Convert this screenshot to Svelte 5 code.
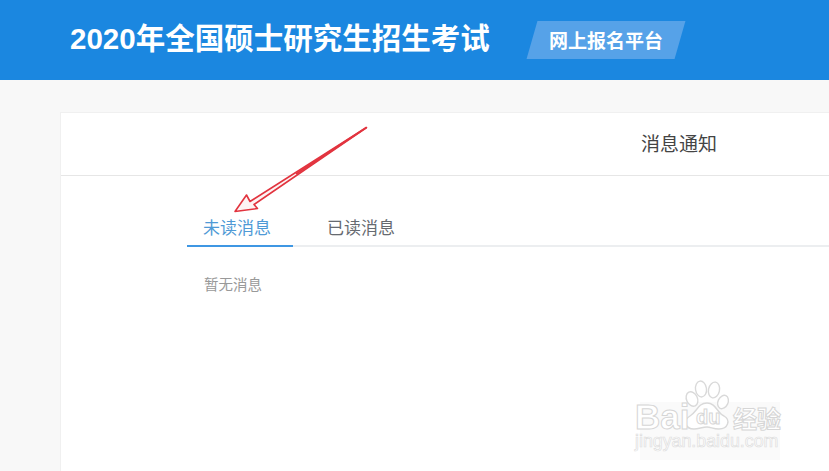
<script>
    // Tabs for the message list
    const tabs = ["未读消息", "已读消息"];
    let active = $state(0);
</script>

<div class="page">
    <header class="topbar">
        <h1>2020年全国硕士研究生招生考试</h1>
        <div class="badge"><span>网上报名平台</span></div>
    </header>

    <main class="card">
        <div class="card-title">消息通知</div>
        <div class="tabs">
            {#each tabs as tab, i}
                <button class="tab" class:active={active === i} onclick={() => (active = i)}>{tab}</button>
            {/each}
        </div>
        <p class="empty">暂无消息</p>
    </main>

    <!-- Red annotation arrow drawn over the page -->
    <svg class="arrow" width="829" height="471" viewBox="0 0 829 471" aria-hidden="true">
        <path d="M235 211.5 L246.5 195 L250 201.5 L366.5 127.5 L254 204.5 L257.5 208.5 Z" fill="#fdf4f4" stroke="#e2343f" stroke-width="1.6" stroke-linejoin="round" />
        <path d="M366.5 127.5 L296 174" stroke="#e2343f" stroke-width="2" fill="none" />
    </svg>

    <!-- Baidu jingyan watermark -->
    <svg class="mark" width="829" height="471" viewBox="0 0 829 471" aria-hidden="true">
        <rect x="640" y="402" width="140" height="58" fill="#f7f7f7" opacity="0.6" />
        <g fill="#fff" stroke="#d9d9d9" stroke-width="1.4">
            <ellipse cx="692" cy="399" rx="5.5" ry="7.5" transform="rotate(-25 692 399)" />
            <ellipse cx="701" cy="389" rx="5.5" ry="8" transform="rotate(-8 701 389)" />
            <ellipse cx="714" cy="390" rx="5.5" ry="8" transform="rotate(12 714 390)" />
            <ellipse cx="723" cy="402" rx="5" ry="7" transform="rotate(25 723 402)" />
            <path d="M707 403 C716 403 717 413 724 416 C731 420 728 429 719 429 C713 429 711 427 707 427 C702 427 699 429 694 429 C685 429 683 420 690 416 C697 412 698 403 707 403 Z" />
        </g>
        <g class="outline">
            <text x="635" y="429" font-size="35" font-weight="700">Bai</text>
            <text x="696" y="424" font-size="20" font-weight="700">du</text>
            <text x="733" y="428" font-size="24" font-weight="700">经验</text>
        </g>
        <text x="635" y="447" class="url" font-size="17.8">jingyan.baidu.com</text>
    </svg>
</div>

<style>
    :global(body) {
        margin: 0;
        background: #f8f8f8;
    }

    .page {
        position: relative;
        width: 829px;
        height: 471px;
        overflow: hidden;
        background: #f8f8f8;
        font-family: "Noto Sans CJK SC", "Liberation Sans", sans-serif;
    }

    .topbar {
        display: flex;
        align-items: center;
        height: 80px;
        padding-left: 70px;
        background: #1b87e0;
        color: #fff;
    }

    .topbar h1 {
        margin: -3px 36px 0 0;
        font-family: "Liberation Sans", "Noto Sans CJK SC", sans-serif;
        font-size: 29.5px;
        font-weight: 700;
        line-height: 38px;
        white-space: nowrap;
    }

    .badge {
        display: flex;
        align-items: center;
        justify-content: center;
        width: 148px;
        height: 38px;
        margin-left: 6px;
        background: #56a2e8;
        transform: skewX(-16deg);
    }

    .badge span {
        font-size: 19px;
        font-weight: 700;
        line-height: 38px;
        white-space: nowrap;
        transform: skewX(16deg);
    }

    .card {
        box-sizing: border-box;
        width: 1238px;
        height: 400px;
        margin: 32px 0 0 60px;
        background: #fff;
        border: 1px solid #f0f0f0;
    }

    .card-title {
        height: 62px;
        border-bottom: 1px solid #e6e6e6;
        color: #444;
        font-size: 19px;
        line-height: 60px;
        text-align: center;
    }

    .tabs {
        display: flex;
        margin: 33px 0 0 126px;
        border-bottom: 2px solid #eceef0;
    }

    .tab {
        box-sizing: border-box;
        height: 38px;
        margin: 0 18px -2px 0;
        padding: 0 22px 0 16px;
        border: 0;
        border-bottom: 2px solid transparent;
        background: none;
        color: #666a70;
        font: inherit;
        font-size: 17px;
        line-height: 32px;
        white-space: nowrap;
        cursor: pointer;
    }

    .tab.active {
        border-bottom-color: #3f97e3;
        color: #4f9ad6;
    }

    .empty {
        margin: 26px 0 0 143px;
        color: #999;
        font-size: 14.5px;
        line-height: 22px;
    }

    .arrow,
    .mark {
        position: absolute;
        top: 0;
        left: 0;
        pointer-events: none;
    }

    .outline text {
        fill: #fff;
        stroke: #d6d6d6;
        stroke-width: 1;
        font-family: "Liberation Sans", "Noto Sans CJK SC", sans-serif;
    }

    .url {
        fill: #fff;
        stroke: #dedede;
        stroke-width: 0.7;
        font-family: "Liberation Sans", sans-serif;
    }
</style>
